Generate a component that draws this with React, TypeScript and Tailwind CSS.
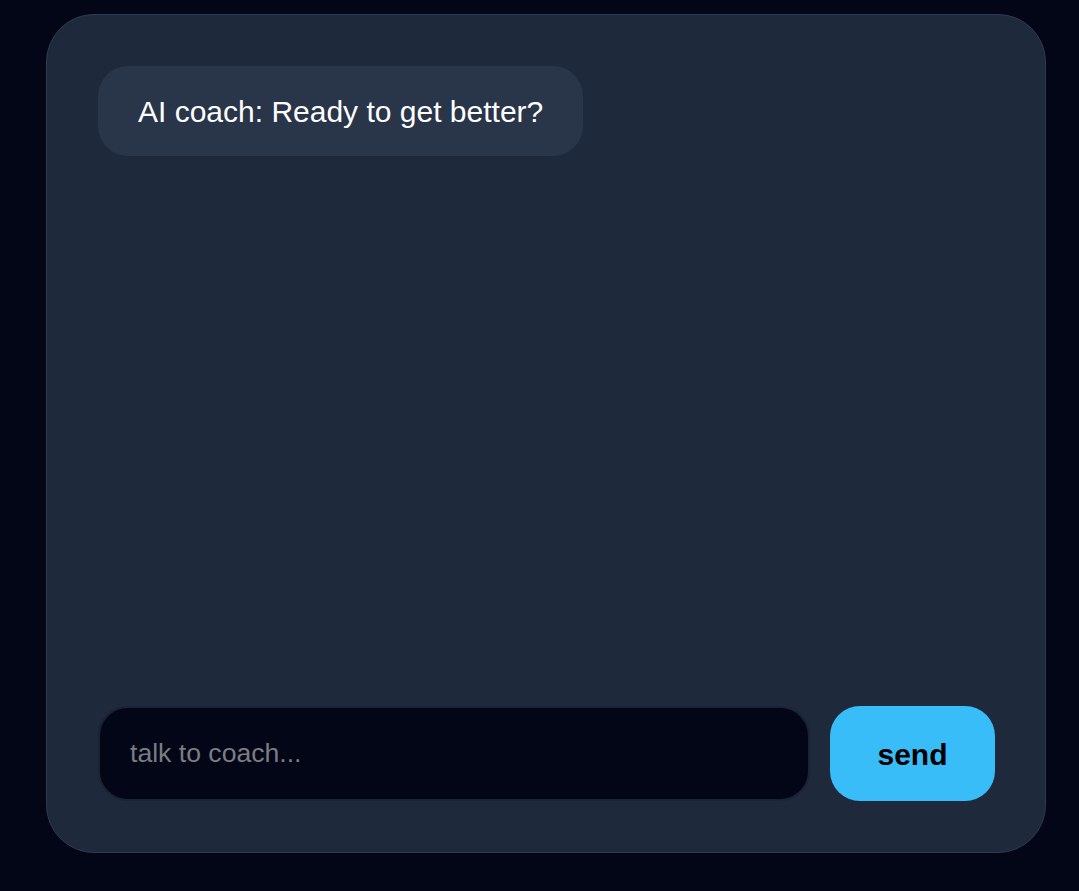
export default function App() {
  return (
    <div className="min-h-[891px] bg-[#020617] pt-[14px] pl-[46px]" style={{ fontFamily: '"Liberation Sans", Arial, sans-serif' }}>
      <div className="flex h-[839px] w-[1000px] flex-col rounded-[48px] border border-[#2e3a4e] bg-[#1e293b] pt-[51px] pb-[51px] pl-[51px] pr-[50px]">
        <div className="flex flex-1 flex-col items-start">
          <div className="flex h-[90px] items-center rounded-[30px] bg-[#293548] px-[40px] text-[30px] text-white">
            AI coach: Ready to get better?
          </div>
        </div>
        <div className="flex gap-[20px]">
          <input
            placeholder="talk to coach..."
            className="h-[95px] min-w-0 flex-1 rounded-[30px] border-2 border-[#1a2336] bg-[#020617] px-[30px] text-[26.6px] text-white outline-none placeholder:text-[#7c7c82]"
          />
          <button className="h-[95px] w-[165px] rounded-[30px] bg-[#38bdf8] pt-[2px] text-[30px] font-black text-black">
            send
          </button>
        </div>
      </div>
    </div>
  )
}
